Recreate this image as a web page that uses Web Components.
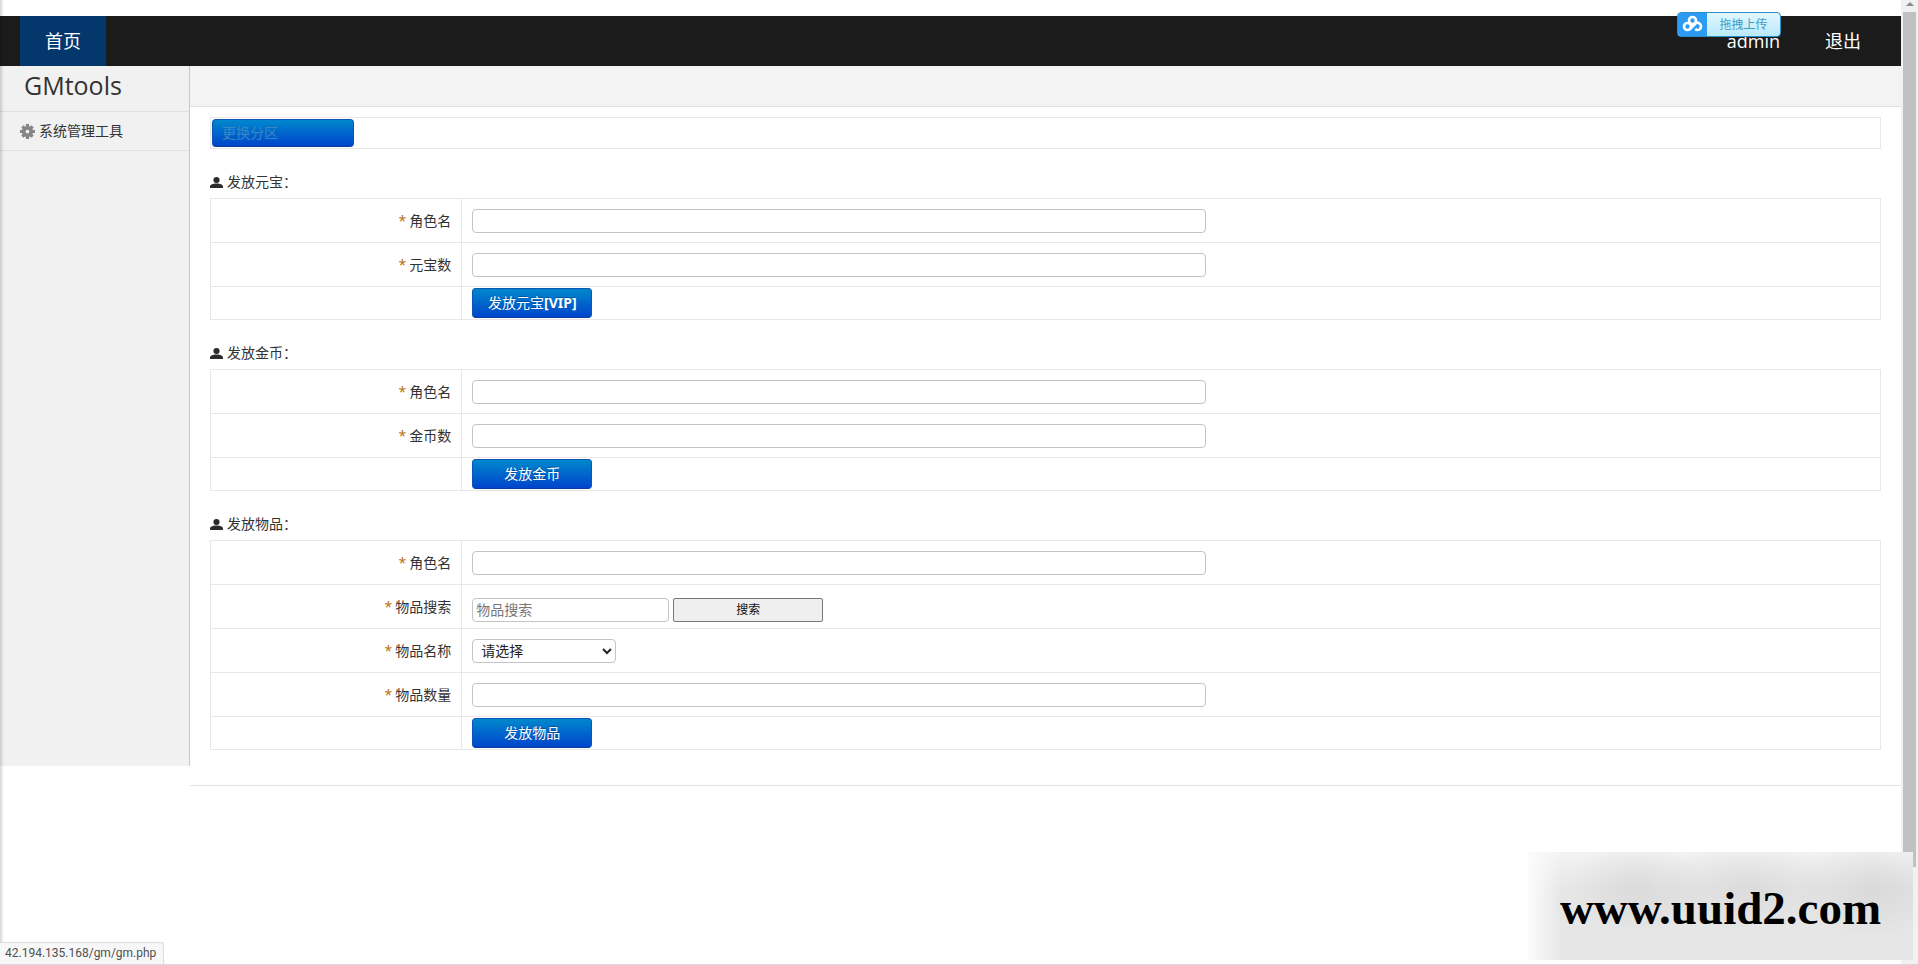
<!DOCTYPE html>
<html lang="zh-CN">
<head>
<meta charset="utf-8">
<title>GMtools</title>
<style>
html, body { margin: 0; height: 100%; }
body { overflow: hidden; background: #fff; color: #333; font: 14px/20px "Open Sans", "Noto Sans CJK SC", sans-serif; }
</style>
</head>
<body>
<gm-app>
  <gm-topbar slot="top"></gm-topbar>
  <gm-sidebar slot="side" heading="GMtools"><gm-menu-item href="#tools">系统管理工具</gm-menu-item></gm-sidebar>
  <gm-zone-bar>更换分区</gm-zone-bar>
  <gm-form heading="发放元宝：" submit="发放元宝[VIP]" fields="角色名|元宝数"></gm-form>
  <gm-form heading="发放金币：" submit="发放金币" fields="角色名|金币数"></gm-form>
  <gm-form heading="发放物品：" submit="发放物品" fields="角色名|物品搜索:search|物品名称:select|物品数量"></gm-form>
</gm-app>

<script>
function define(name, render) {
  customElements.define(name, class extends HTMLElement {
    connectedCallback() {
      if (!this.shadowRoot) this.attachShadow({ mode: 'open' }).innerHTML = render(this);
    }
  });
}

const buttonCss = `
  .btn { box-sizing: border-box; border: 1px solid #0a55b5; border-bottom-color: #083f9c; border-radius: 4px;
    background: linear-gradient(#0088cc, #0044cc); color: #fff; font: inherit; padding: 0; cursor: pointer;
    text-shadow: 0 -1px 0 rgba(0,0,0,.25); display: block; }`;

define('gm-app', () => `
  <style>
    :host { display: grid; grid-template-columns: minmax(0, 1fr) 17px; height: 100vh; box-sizing: border-box; border-bottom: 1px solid #d5d9dc; position: relative; }
    .page { padding-top: 16px; overflow: hidden; }
    .body { display: grid; grid-template-columns: 190px minmax(0, 1fr); align-items: start; }
    ::slotted([slot=side]) { margin-bottom: 20px; align-self: stretch; }
    .crumb { height: 40px; background: #f3f3f3; border-bottom: 1px solid #e0e0e0; }
    .content { padding: 10px 20px 35px; }
    main { border-bottom: 1px solid #e3e3e3; }
    .edge { position: absolute; inset: 0 auto 0 0; width: 4px; background: linear-gradient(90deg, rgba(0,0,0,.16), rgba(0,0,0,0)); pointer-events: none; }
  </style>
  <div class="page">
    <slot name="top"></slot>
    <div class="body">
      <slot name="side"></slot>
      <main><div class="crumb"></div><div class="content"><slot></slot></div></main>
    </div>
  </div>
  <gm-scroll></gm-scroll>
  <div class="edge"></div>
  <gm-upload></gm-upload>
  <gm-status>42.194.135.168/gm/gm.php</gm-status>
  <gm-mark>www.uuid2.com</gm-mark>`);

define('gm-topbar', () => `
  <style>
    :host { display: block; background: #1b1b1b; }
    nav { display: flex; height: 50px; padding: 0 20px; align-items: stretch; }
    a { color: #fff; text-decoration: none; font-size: 18px; line-height: 50px; }
    .home { background: #04376c; width: 86px; text-align: center; }
    .user { margin-left: auto; padding-right: 45px; }
    .out { padding-right: 20px; }
  </style>
  <nav><a class="home" href="#home">首页</a><a class="user" href="#user">admin</a><a class="out" href="#logout">退出</a></nav>`);

define('gm-sidebar', el => `
  <style>
    :host { display: block; background: #f1f1f1; border-right: 1px solid #c8c8c8; }
    h1 { margin: 0; padding-left: 24px; font-size: 25px; font-weight: 400; line-height: 38px; border-bottom: 1px solid #e0e0e0; box-sizing: border-box; height: 46px; }
  </style>
  <h1>${el.getAttribute('heading')}</h1><slot></slot>`);

define('gm-menu-item', el => `
  <style>
    :host { display: block; border-bottom: 1px solid #e0e0e0; }
    a { display: flex; align-items: center; gap: 4px; padding-left: 20px; height: 38px; color: #333; text-decoration: none; }
    svg { width: 15px; height: 15px; }
  </style>
  <a href="${el.getAttribute('href')}">
    <svg viewBox="-8 -8 16 16" fill="none" stroke="#858585" aria-hidden="true">
      <circle r="4" stroke-width="4"/>
      <path d="M0-5V-8M0 5V8M-5 0H-8M5 0H8M-3.8-3.8-5.5-5.5M3.8-3.8 5.5-5.5M-3.8 3.8-5.5 5.5M3.8 3.8 5.5 5.5" stroke-width="3.4"/>
    </svg><slot></slot></a>`);

define('gm-zone-bar', () => `
  <style>
    :host { display: block; box-sizing: border-box; height: 32px; border: 1px solid #e8e8e8; padding: 1px; }
    ${buttonCss}
    .btn { width: 142px; height: 28px; padding-left: 9px; text-align: left; color: #3988c6; text-shadow: none; }
  </style>
  <button class="btn" type="button"><slot></slot></button>`);

const controls = {
  text: id => `<input class="box wide" type="text" id="${id}">`,
  search: id => `<div class="line"><input class="box find" type="text" id="${id}" placeholder="物品搜索"><button class="go" type="button">搜索</button></div>`,
  select: id => `<select class="box" id="${id}"><option>请选择</option></select>`
};

define('gm-form', el => `
  <style>
    :host { display: block; }
    h2 { display: flex; align-items: center; gap: 4px; margin: 23px 0 6px; font-size: 14px; line-height: 20px; font-weight: 400; }
    h2 svg { width: 13px; height: 11px; }
    table { width: 100%; border-collapse: collapse; table-layout: fixed; }
    col:first-child { width: 15.05%; }
    th, td { border: 1px solid #e8e8e8; padding: 0 10px; height: 43px; box-sizing: border-box; }
    th { text-align: right; font-weight: 400; }
    th span { color: #b86a00; margin-right: 3px; }
    tr { height: 44px; }
    tr:last-child, tr:last-child td { height: 33px; }
    .box { box-sizing: border-box; display: block; height: 24px; border: 1px solid #c4c4c4; border-radius: 4px; background: #fff; font: inherit; padding: 0 4px; color: #222; }
    .box::placeholder { color: #777; }
    .wide { width: 52.5%; }
    .find { padding: 0 3px; width: 197px; }
    select.box { width: 144px; }
    .line { display: flex; gap: 4px; padding-top: 6px; }
    .go { width: 150px; height: 24px; box-sizing: border-box; border: 1px solid #767676; border-radius: 2px; background: #efefef; color: #111; font: inherit; font-size: 12px; padding: 0; }
    ${buttonCss}
    .btn { width: 120px; height: 30px; font-family: "Noto Sans", "Noto Sans CJK SC", sans-serif; font-weight: 700; }
    .btn span { font-weight: 400; }
  </style>
  <form>
    <h2><svg viewBox="0 0 13 11" fill="#2b2b2b" aria-hidden="true"><ellipse cx="6.5" cy="3" rx="3.1" ry="3"/><path d="M0 11V9.4C0 8 2.400 7 4.600 6.600H8.400C10.600 7 13 8 13 9.400V11Z"/></svg>${el.getAttribute('heading')}</h2>
    <table><colgroup><col><col></colgroup><tbody>
      ${el.getAttribute('fields').split('|').map((field, i) => {
        const [label, kind = 'text'] = field.split(':');
        return `<tr><th scope="row"><span>*</span><label for="f${i}">${label}</label></th><td>${controls[kind]('f' + i)}</td></tr>`;
      }).join('')}
      <tr><td></td><td><button class="btn" type="button">${el.getAttribute('submit').replace(/^[^\[]+/, '<span>$&</span>')}</button></td></tr>
    </tbody></table>
  </form>`);

define('gm-scroll', () => `
  <style>
    :host { display: flex; flex-direction: column; align-items: center; background: #f1f1f1; }
    svg { width: 8px; height: 4px; margin: 2px 0 6px; flex: none; }
    div { width: 13px; height: 88.7%; background: #c1c1c1; }
  </style>
  <svg viewBox="0 0 8 4" fill="#8a8a8a" aria-hidden="true"><path d="M0 4 4 0 8 4Z"/></svg><div></div>`);

define('gm-upload', () => `
  <style>
    :host { position: absolute; top: 12px; right: 137px; }
    button { display: flex; box-sizing: border-box; width: 104px; height: 25px; padding: 0; border: 1px solid #2d8fc4; border-radius: 4px; overflow: hidden; background: linear-gradient(#e2f7fe, #b9e9fb); color: #3d9cc4; font: inherit; font-size: 12px; line-height: 23px; }
    svg { width: 29px; height: 23px; background: #2b9bf4; flex: none; }
    span { flex: 1; text-align: center; }
  </style>
  <button type="button"><svg viewBox="0 0 29 23" fill="none" stroke="#fff" stroke-width="2.600" aria-hidden="true"><circle cx="14.500" cy="7.500" r="3.500"/><circle cx="9.500" cy="13.500" r="3.500"/><path d="M12.200 15.800 17 11A3.500 3.500 0 1 1 17.200 16"/></svg><span>拖拽上传</span></button>`);

define('gm-status', () => `
  <style>
    :host { position: absolute; left: 0; bottom: 0; box-sizing: border-box; height: 22px; padding: 0 7px 0 5px; font: 12px/21px Roboto, sans-serif; color: #505050; background: #f7f7f7; border: 1px solid #dcdcdc; border-width: 1px 1px 0 0; border-radius: 0 3px 0 0; }
  </style><slot></slot>`);

define('gm-mark', () => `
  <style>
    :host { position: absolute; right: 5px; bottom: 4px; width: 385px; height: 108px; text-align: center; color: #000;
      font: bold 47px/112px "Liberation Serif", serif;
      background:
        linear-gradient(90deg, #fcfcfc, rgba(240,240,240,0) 34px),
        radial-gradient(ellipse 70px 46px at 110px 36px, rgba(208,208,208,.55), transparent),
        radial-gradient(ellipse 90px 46px at 220px 34px, rgba(208,208,208,.5), transparent),
        radial-gradient(ellipse 80px 50px at 345px 36px, rgba(206,206,206,.55), transparent),
        linear-gradient(#f3f3f3, #e6e6e6 40px, #e6e6e6); }
  </style><slot></slot>`);
</script>
</body>
</html>
